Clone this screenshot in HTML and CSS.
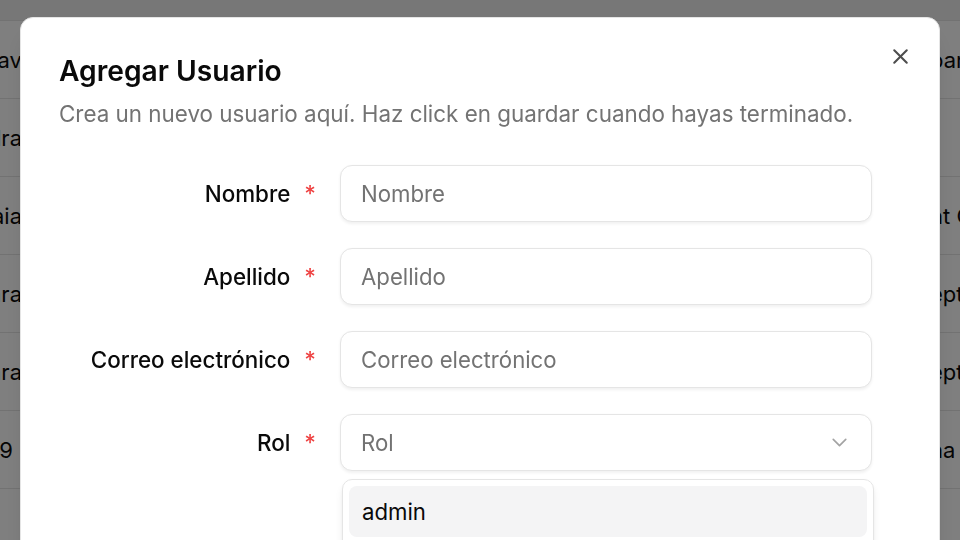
FILE: index.html
```html
<!DOCTYPE html>
<html lang="es">
<head>
<meta charset="utf-8">
<title>Usuarios</title>
<link rel="stylesheet" href="styles.css">
</head>
<body>
  <main class="page">
    <div class="table">
      <div class="thead"></div>
      <div class="row"><span class="cell-start">Gustav</span><span class="cell-end">par</span></div>
      <div class="row"><span class="cell-start">Sandra</span><span class="cell-end"></span></div>
      <div class="row"><span class="cell-start">Amaia</span><span class="cell-end">nt Corp</span></div>
      <div class="row"><span class="cell-start">Clara</span><span class="cell-end">epto.</span></div>
      <div class="row"><span class="cell-start">Sara</span><span class="cell-end">epto.</span></div>
      <div class="row"><span class="cell-start narrow">1989</span><span class="cell-end">na</span></div>
      <div class="row"><span class="cell-start"></span><span class="cell-end"></span></div>
    </div>
  </main>

  <div class="overlay"></div>

  <section class="dialog" role="dialog" aria-labelledby="dlg-title">
    <button class="close" type="button" aria-label="Cerrar">
      <svg width="25" height="25" viewBox="0 0 24 24" fill="none" stroke="currentColor" stroke-width="2" stroke-linecap="round" stroke-linejoin="round"><path d="M18 6 6 18"/><path d="m6 6 12 12"/></svg>
    </button>

    <header class="dialog-header">
      <h2 class="title" id="dlg-title">Agregar Usuario</h2>
      <p class="desc">Crea un nuevo usuario aquí. Haz click en guardar cuando hayas terminado.</p>
    </header>

    <form class="form">
      <label class="label" for="f-nombre">Nombre <span class="req">*</span></label>
      <input class="input" id="f-nombre" type="text" placeholder="Nombre">

      <label class="label" for="f-apellido">Apellido <span class="req">*</span></label>
      <input class="input" id="f-apellido" type="text" placeholder="Apellido">

      <label class="label" for="f-correo">Correo electrónico <span class="req">*</span></label>
      <input class="input" id="f-correo" type="email" placeholder="Correo electrónico">

      <label class="label" for="f-rol">Rol <span class="req">*</span></label>
      <div class="select-wrap">
        <button class="select" id="f-rol" type="button">
          <span class="placeholder">Rol</span>
          <svg class="chevron" width="25" height="25" viewBox="0 0 24 24" fill="none" stroke="currentColor" stroke-width="1.6" stroke-linecap="round" stroke-linejoin="round"><path d="m6 9 6 6 6-6"/></svg>
        </button>
        <div class="menu" role="listbox">
          <div class="option active" role="option">admin</div>
          <div class="option" role="option">usuario</div>
          <div class="option" role="option">invitado</div>
        </div>
      </div>
    </form>
  </section>
</body>
</html>
```

FILE: styles.css
```css
* {
  box-sizing: border-box;
}

html, body {
  margin: 0;
  height: 100%;
  overflow: hidden;
}

body {
  font-family: "Inter", "Noto Sans", sans-serif;
  color: #0a0a0a;
  background: #ffffff;
}

/* table behind the dialog */
.table {
  display: flex;
  flex-direction: column;
}

.thead {
  height: 21px;
  background: #eeeeee;
  border-bottom: 1px solid #e5e5e5;
}

.row {
  height: 78px;
  border-bottom: 1px solid #e5e5e5;
  display: flex;
  align-items: center;
  font-size: 22px;
  white-space: nowrap;
}

.cell-start {
  width: 22px;
  display: flex;
  justify-content: flex-end;
  flex: none;
}

.cell-start.narrow {
  width: 13px;
  margin-right: 9px;
}

.cell-end {
  margin-left: 908px;
}

/* dim layer */
.overlay {
  position: fixed;
  inset: 0;
  background: rgba(0, 0, 0, 0.5);
}

/* dialog */
.dialog {
  position: fixed;
  left: 20px;
  top: 17px;
  width: 920px;
  height: 600px;
  background: #ffffff;
  border: 1px solid #e5e5e5;
  border-radius: 13px;
  padding: 39px 38px 38px 38px;
  box-shadow: 0 16px 24px -6px rgba(0, 0, 0, 0.12), 0 6px 10px -6px rgba(0, 0, 0, 0.1);
}

.close {
  position: absolute;
  top: 26px;
  right: 26px;
  width: 25px;
  height: 25px;
  padding: 0;
  border: 0;
  background: none;
  color: #4d4d4d;
  display: flex;
}

.dialog-header {
  display: flex;
  flex-direction: column;
}

.title {
  margin: 0;
  font-size: 28.2px;
  line-height: 28px;
  font-weight: 600;
}

.desc {
  margin: 14px 0 0;
  font-size: 22.4px;
  line-height: 30px;
  color: #737373;
}

.form {
  margin-top: 36px;
  display: grid;
  grid-template-columns: 257px 532px;
  column-gap: 24px;
  row-gap: 26px;
  align-items: center;
}

.label {
  display: flex;
  justify-content: flex-end;
  align-items: center;
  gap: 14px;
  font-size: 22.4px;
  font-weight: 500;
  white-space: nowrap;
}

.req {
  color: #ef4444;
  font-weight: 500;
}

.input,
.select {
  width: 100%;
  height: 57px;
  border: 1px solid #e5e5e5;
  border-radius: 12px;
  background: #ffffff;
  box-shadow: 0 1.5px 3px rgba(0, 0, 0, 0.06);
  padding: 0 19px 0 20px;
  font-family: inherit;
  font-size: 22.2px;
  color: #0a0a0a;
  outline: none;
}

.input::placeholder {
  color: #737373;
}

.select-wrap {
  position: relative;
}

.select {
  display: flex;
  align-items: center;
  justify-content: space-between;
  text-align: left;
}

.placeholder {
  color: #737373;
}

.chevron {
  color: #a3a3a3;
  flex: none;
}

/* open listbox, lies over the dialog */
.menu {
  position: absolute;
  top: calc(100% + 8px);
  left: 2px;
  width: 100%;
  background: #ffffff;
  border: 1px solid #e5e5e5;
  border-radius: 10px;
  padding: 6px;
  box-shadow: 0 6px 10px -2px rgba(0, 0, 0, 0.1), 0 2px 6px -2px rgba(0, 0, 0, 0.08);
  z-index: 2;
}

.option {
  height: 51px;
  display: flex;
  align-items: center;
  padding: 0 13px;
  border-radius: 8px;
  font-size: 22.2px;
}

.option.active {
  background: #f4f4f5;
}
```
